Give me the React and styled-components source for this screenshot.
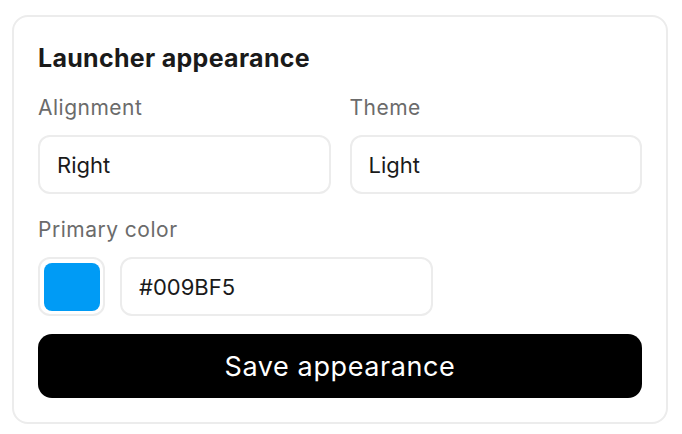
import React from 'react'
import styled, { createGlobalStyle } from 'styled-components'

const Global = createGlobalStyle`
  body {
    margin: 0;
    background: #fff;
    font-family: Inter, "Noto Sans", sans-serif;
  }
`

const Page = styled.div`
  padding: 15px 14px 12px 12px;
`

const Card = styled.section`
  border: 2px solid #ececec;
  border-radius: 16px;
  padding: 26px 24px 24px 24px;
  display: flex;
  flex-direction: column;
`

const Title = styled.h2`
  margin: 0 0 22px;
  font-size: 25px;
  font-weight: 700;
  color: #1a1a1a;
  letter-spacing: 0.3px;
  line-height: 30px;
`

const Row = styled.div`
  display: grid;
  grid-template-columns: 1fr 1fr;
  gap: 19px;
`

const Field = styled.div`
  display: flex;
  flex-direction: column;
  margin-top: ${p => p.$offset || 0}px;
`

const Label = styled.label`
  font-size: 21px;
  color: #6b6b6b;
  letter-spacing: 0.5px;
  line-height: 26px;
  margin-bottom: 14px;
`

const Input = styled.div`
  height: 55px;
  border: 2px solid #ececec;
  border-radius: 12px;
  display: flex;
  align-items: center;
  padding: 0 17px;
  font-size: 22px;
  color: #1a1a1a;
  width: ${p => p.$width || 'auto'};
  box-sizing: content-box;
`

const ColorRow = styled.div`
  display: flex;
  gap: 15px;
  align-items: center;
`

const Swatch = styled.div`
  width: 63px;
  height: 55px;
  border: 2px solid #ececec;
  border-radius: 12px;
  display: flex;
  align-items: center;
  justify-content: center;
  &::after {
    content: "";
    width: 56px;
    height: 48px;
    border-radius: 8px;
    background: ${p => p.$color};
  }
`

const SaveButton = styled.button`
  margin-top: 18px;
  height: 64px;
  border: none;
  border-radius: 14px;
  background: #000;
  color: #fff;
  font-family: Inter, "Noto Sans", sans-serif;
  font-size: 27px;
  font-weight: 400;
  letter-spacing: 0.6px;
  cursor: pointer;
`

export default function App () {
  const color = '#009BF5'
  return (
    <Page>
      <Global />
      <Card>
        <Title>Launcher appearance</Title>
        <Row>
          <Field>
            <Label>Alignment</Label>
            <Input>Right</Input>
          </Field>
          <Field>
            <Label>Theme</Label>
            <Input>Light</Input>
          </Field>
        </Row>
        <Field $offset={23}>
          <Label>Primary color</Label>
          <ColorRow>
            <Swatch $color={color} />
            <Input $width='275px'>{color}</Input>
          </ColorRow>
        </Field>
        <SaveButton>Save appearance</SaveButton>
      </Card>
    </Page>
  )
}
